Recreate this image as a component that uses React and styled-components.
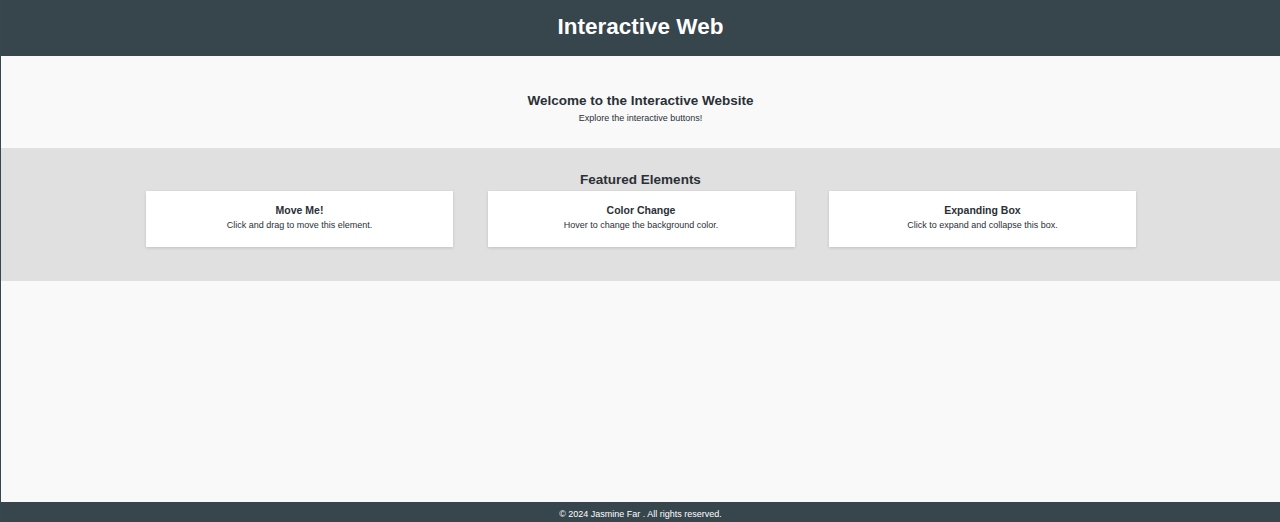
import React from "react";
import styled, { createGlobalStyle } from "styled-components";

const GlobalStyle = createGlobalStyle`
  html, body {
    margin: 0;
    padding: 0;
    height: 100%;
  }
  body {
    background: #f9f9f9;
    color: #2a3036;
    font-family: "Liberation Sans", Arial, sans-serif;
  }
`;

const Page = styled.div`
  display: flex;
  flex-direction: column;
  height: 522px;
  overflow: hidden;
  border-left: 1px solid #37474f;
`;

const Header = styled.header`
  height: 56px;
  flex: none;
  box-sizing: border-box;
  padding-bottom: 2px;
  margin-left: -1px;
  border-left: 1px solid #5c6064;
  display: flex;
  align-items: center;
  justify-content: center;
  background: #37454d;
`;

const Title = styled.h1`
  margin: 0;
  font-size: 22.5px;
  font-weight: 700;
  color: #fff;
`;

const Hero = styled.section`
  height: 92px;
  flex: none;
  box-sizing: border-box;
  padding-top: 37px;
  text-align: center;
`;

const HeroTitle = styled.h2`
  margin: 0;
  font-size: 13.5px;
  line-height: 16px;
  font-weight: 700;
`;

const HeroText = styled.p`
  margin: 3px 0 0;
  font-size: 9px;
  line-height: 12px;
`;

const Featured = styled.section`
  height: 133px;
  flex: none;
  box-sizing: border-box;
  padding-top: 24px;
  background: #e0e0e0;
  text-align: center;
`;

const FeaturedTitle = styled.h3`
  margin: 0;
  font-size: 13.5px;
  line-height: 15px;
  font-weight: 700;
`;

const Cards = styled.div`
  display: flex;
  justify-content: center;
  gap: 34.5px;
  margin-top: 4px;
  padding-left: 1px;
`;

const Card = styled.article`
  width: 307px;
  height: 56px;
  box-sizing: border-box;
  padding-top: 13px;
  background: #fff;
  box-shadow: 0 1px 3px rgba(0, 0, 0, 0.14);
`;

const CardTitle = styled.h4`
  margin: 0;
  font-size: 10.5px;
  line-height: 12px;
  font-weight: 700;
`;

const CardText = styled.p`
  margin: 4px 0 0;
  font-size: 9px;
  line-height: 11px;
`;

const Spacer = styled.div`
  flex: 1;
`;

const Footer = styled.footer`
  height: 20px;
  flex: none;
  box-sizing: border-box;
  padding-top: 4px;
  margin-left: -1px;
  border-left: 1px solid #5c6064;
  display: flex;
  align-items: center;
  justify-content: center;
  background: #37454d;
  color: #fff;
  font-size: 9px;
`;

const cards = [
  { title: "Move Me!", text: "Click and drag to move this element." },
  { title: "Color Change", text: "Hover to change the background color." },
  { title: "Expanding Box", text: "Click to expand and collapse this box." },
];

function App() {
  return (
    <>
      <GlobalStyle />
      <Page>
        <Header>
          <Title>Interactive Web</Title>
        </Header>
        <Hero>
          <HeroTitle>Welcome to the Interactive Website</HeroTitle>
          <HeroText>Explore the interactive buttons!</HeroText>
        </Hero>
        <Featured>
          <FeaturedTitle>Featured Elements</FeaturedTitle>
          <Cards>
            {cards.map((card) => (
              <Card key={card.title}>
                <CardTitle>{card.title}</CardTitle>
                <CardText>{card.text}</CardText>
              </Card>
            ))}
          </Cards>
        </Featured>
        <Spacer />
        <Footer>© 2024 Jasmine Far . All rights reserved.</Footer>
      </Page>
    </>
  );
}

export default App;
